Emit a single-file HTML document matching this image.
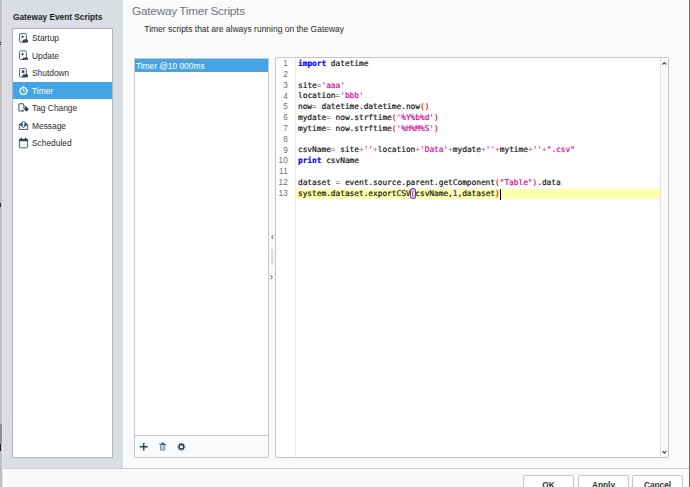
<!DOCTYPE html>
<html lang="en">
<head>
<meta charset="utf-8">
<title>Gateway Event Scripts</title>
<style>
html,body{margin:0;padding:0;}
body{width:690px;height:487px;overflow:hidden;position:relative;background:#fafafa;
  font-family:"Liberation Sans","DejaVu Sans",sans-serif;font-size:8.4px;color:#2b2b2b;}
.abs{position:absolute;}
#edgeL{left:0;top:0;width:1.9px;height:487px;background:#bebebe;}
.mk{position:absolute;left:0;}
#edgeL2{left:1.9px;top:0;width:1.1px;height:487px;background:#e6e7e9;}
#edgeR{left:689px;top:0;width:1px;height:487px;background:#6e6e6e;}
#sidebar{left:3px;top:0;width:119.5px;height:468px;background:#dadde1;}
#main{left:122.5px;top:0;width:566.5px;height:468px;background:#fafafa;border:solid #fff;border-width:1.2px 1px 1.4px 2px;box-sizing:border-box;}
#footer{left:3px;top:468px;width:686px;height:19px;background:#f9f9f9;border-top:1px solid #c9cdd3;box-sizing:border-box;}
#sbTitle{left:13px;top:11px;transform:rotate(0.01deg);font-weight:bold;font-size:8.3px;color:#222;white-space:nowrap;line-height:12px;}
#sbList{left:12px;top:28px;width:101px;height:430px;background:#fff;border:1px solid #b1b5bb;box-sizing:border-box;}
.item{position:absolute;left:0;width:99px;height:17px;line-height:17px;white-space:nowrap;color:#2b2b2b;}
.item span{position:absolute;left:18.8px;top:0;}
.item svg{position:absolute;left:6px;top:3px;}
.item.sel{color:#fff;}
#sbSel{left:-0.4px;top:52.8px;width:99.4px;height:16.9px;background:#45a4e4;}
#title{left:131.6px;top:1.5px;transform:rotate(0.01deg);font-size:11.8px;letter-spacing:-0.23px;word-spacing:-0.5px;color:#6e7680;white-space:nowrap;line-height:18px;}
#subtitle{left:144.3px;top:23px;font-size:8.47px;color:#2b2b2b;white-space:nowrap;line-height:12px;}
#scList{left:134.3px;top:57.5px;width:134.7px;height:378.5px;background:#fff;border:1px solid #c6cacf;box-sizing:border-box;}
#scSel{left:0;top:0;width:133px;height:13.4px;background:#45a4e4;color:#fff;line-height:15px;white-space:nowrap;}
#scSel span{position:absolute;left:0.6px;top:0;}
#scTools{left:134.3px;top:435.3px;width:134.7px;height:22.3px;border-radius:0 0 2px 2px;background:#f9fafb;border:1px solid #c3c7cc;box-sizing:border-box;}
#editor{left:275px;top:57.3px;width:394px;height:400.4px;background:#fff;border:1px solid #c1c6cc;border-radius:2px;box-sizing:border-box;}
#gutLine{left:18.9px;top:0;width:1px;height:399px;background:#eaeaea;}
#vsb{left:384.4px;top:0;width:7.6px;height:399px;background:#fbfbfb;border-left:1px solid #dde0e5;box-sizing:border-box;}
#hl{left:19.7px;top:130.4px;width:364px;height:10.8px;background:#ffffaa;}
#code{left:0;top:0;width:380px;height:399px;transform:rotate(0.005deg);transform-origin:0 0;}
.ln{position:absolute;left:0;width:11.9px;text-align:right;font-size:8.2px;letter-spacing:0.15px;color:#707070;height:11px;line-height:11px;}
.cl{position:absolute;left:22px;height:11px;line-height:11px;white-space:pre;
  font-family:"DejaVu Sans Mono","Liberation Mono",monospace;font-size:7.9px;letter-spacing:-0.061px;color:#111;-webkit-text-stroke:0.18px currentColor;}
.k{color:#0000ff;font-weight:bold;}
.s{color:#dc009c;}
.p{color:#ff0000;}
.o{color:#a07070;-webkit-text-stroke:0;}
.n{color:#6400c8;}
.mb{outline:1px solid #3a3ad0;outline-offset:-0.5px;border-radius:2px;background:#f4f2ff;}
#caret{left:223.8px;top:130.4px;width:1px;height:11px;background:#000;}
.btn{top:475px;width:51px;height:20px;background:#fff;border:1px solid #c3c7cc;border-radius:2px;box-sizing:border-box;
  text-align:center;font-weight:bold;font-size:8.3px;color:#333;line-height:12px;}
.btn span{position:absolute;left:0;right:0;top:3px;}
</style>
</head>
<body>
<div id="main" class="abs"></div>
<div id="sidebar" class="abs"></div>
<div id="footer" class="abs"></div>
<div id="edgeL" class="abs"></div>
<div id="edgeL2" class="abs"></div>
<div class="mk" style="top:42px;width:1px;height:1.2px;background:#222"></div>
<div class="mk" style="top:44.2px;width:1px;height:1.2px;background:#222"></div>
<div class="mk" style="top:22px;width:1.6px;height:1px;background:#d8c9a8"></div>
<div class="mk" style="top:202.5px;width:1px;height:4px;background:#3a3048"></div>
<div class="mk" style="top:424px;width:1.8px;height:20px;background:#938e8e"></div>
<div class="mk" style="top:444.4px;width:1.2px;height:6.4px;background:#2a1030"></div>
<div id="edgeR" class="abs"></div>

<div id="sbTitle" class="abs">Gateway Event Scripts</div>
<div id="sbList" class="abs">
  <div id="sbSel" class="abs"></div>
  <div class="item" style="top:1px"><span style="transform:translateY(0.45px) rotate(0.01deg)">Startup</span></div>
  <div class="item" style="top:19px"><span style="transform:translateY(-0.08px) rotate(0.01deg)">Update</span></div>
  <div class="item" style="top:36px"><span style="transform:translateY(0.39px) rotate(0.01deg)">Shutdown</span></div>
  <div class="item sel" style="top:54px"><span style="transform:translateY(-0.14px) rotate(0.01deg)">Timer</span></div>
  <div class="item" style="top:71px"><span style="transform:translateY(0.33px) rotate(0.01deg)">Tag Change</span></div>
  <div class="item" style="top:89px"><span style="transform:translateY(-0.20px) rotate(0.01deg)">Message</span></div>
  <div class="item" style="top:106px"><span style="transform:translateY(0.27px) rotate(0.01deg)">Scheduled</span></div>
</div>

<div id="title" class="abs">Gateway Timer Scripts</div>
<div id="subtitle" class="abs">Timer scripts that are always running on the Gateway</div>

<div id="scList" class="abs">
  <div id="scSel" class="abs"><span>Timer @10 000ms</span></div>
</div>
<div id="scTools" class="abs"></div>

<div id="editor" class="abs">
  <div id="gutLine" class="abs"></div>
  <div id="hl" class="abs"></div>
  <div id="vsb" class="abs"></div>
  <div id="caret" class="abs"></div>
  <div id="code" class="abs">
  <div class="ln" style="top:0.1px">1</div>
  <div class="cl" style="top:0.05px"><span class="k">import</span> datetime</div>
  <div class="ln" style="top:10.9px">2</div>
  <div class="ln" style="top:21.7px">3</div>
  <div class="cl" style="top:21.65px">site<span class="o">=</span><span class="s">'aaa'</span></div>
  <div class="ln" style="top:32.5px">4</div>
  <div class="cl" style="top:32.45px">location<span class="o">=</span><span class="s">'bbb'</span></div>
  <div class="ln" style="top:43.3px">5</div>
  <div class="cl" style="top:43.25px">now<span class="o">=</span> datetime.datetime.now<span class="p">(</span><span class="p">)</span></div>
  <div class="ln" style="top:54.1px">6</div>
  <div class="cl" style="top:54.05px">mydate<span class="o">=</span> now.strftime<span class="p">(</span><span class="s">'%Y%b%d'</span><span class="p">)</span></div>
  <div class="ln" style="top:64.9px">7</div>
  <div class="cl" style="top:64.85px">mytime<span class="o">=</span> now.strftime<span class="p">(</span><span class="s">'%H%M%S'</span><span class="p">)</span></div>
  <div class="ln" style="top:75.7px">8</div>
  <div class="ln" style="top:86.5px">9</div>
  <div class="cl" style="top:86.45px">csvName<span class="o">=</span> site<span class="o">+</span><span class="s">''</span><span class="o">+</span>location<span class="o">+</span><span class="s">'Data'</span><span class="o">+</span>mydate<span class="o">+</span><span class="s">''</span><span class="o">+</span>mytime<span class="o">+</span><span class="s">''</span><span class="o">+</span><span class="s">".csv"</span></div>
  <div class="ln" style="top:97.3px">10</div>
  <div class="cl" style="top:97.25px"><span class="k">print</span> csvName</div>
  <div class="ln" style="top:108.1px">11</div>
  <div class="ln" style="top:118.9px">12</div>
  <div class="cl" style="top:118.85px">dataset <span class="o">=</span> event.source.parent.getComponent<span class="p">(</span><span class="s">"Table"</span><span class="p">)</span>.data</div>
  <div class="ln" style="top:129.7px">13</div>
  <div class="cl" style="top:129.65px">system.dataset.exportCSV<span class="p mb">(</span>csvName,<span class="n">1</span>,dataset<span class="p">)</span></div>
  </div>
</div>

<!-- sidebar icons -->
<svg class="abs" style="left:17px;top:31px" width="13" height="13" viewBox="0 0 13 13">
  <rect x="2.5" y="2.6" width="6.9" height="8.6" rx="1.3" fill="#fff" stroke="#4f617a" stroke-width="0.95"/>
  <path d="M4.6 4.2 L7.4 5.8 L4.6 7.4 Z" fill="#33455f"/>
  <path d="M5.4 11.5 L5.4 9.8 Q6 8.3 7.5 8.6 Q9 7.5 10.4 8.5 Q11.5 9.2 11.1 11.5 Z" fill="#33455f"/>
</svg>
<svg class="abs" style="left:17px;top:48px" width="13" height="13" viewBox="0 0 13 13">
  <rect x="2.5" y="2.9" width="6.9" height="8.6" rx="1.3" fill="#fff" stroke="#4f617a" stroke-width="0.95"/>
  <path d="M4.6 4.6 L7.4 6.2 L4.6 7.8 Z" fill="#33455f"/>
  <rect x="5.6" y="9.6" width="5.5" height="2.2" rx="0.5" fill="#33455f"/>
</svg>
<svg class="abs" style="left:17px;top:66px" width="13" height="13" viewBox="0 0 13 13">
  <rect x="2.5" y="2.4" width="6.9" height="8.6" rx="1.3" fill="#fff" stroke="#4f617a" stroke-width="0.95"/>
  <rect x="4.8" y="4.3" width="2.6" height="2.6" fill="#33455f"/>
  <path d="M5.4 11.3 L5.4 9.6 Q6 8.1 7.5 8.4 Q9 7.3 10.4 8.3 Q11.5 9 11.1 11.3 Z" fill="#33455f"/>
</svg>
<svg class="abs" style="left:17px;top:84px" width="13" height="13" viewBox="0 0 13 13">
  <circle cx="6.4" cy="6.95" r="3.35" fill="none" stroke="#fff" stroke-width="1.15"/>
  <path d="M6.4 1.9 V3.4 M10 6.9 H10.9" stroke="#fff" stroke-width="1.1" fill="none"/>
  <path d="M6.4 5 V7.1 H8" stroke="#fff" stroke-width="0.9" fill="none"/>
</svg>
<svg class="abs" style="left:17px;top:101px" width="13" height="13" viewBox="0 0 13 13">
  <path d="M6.8 4.9 V3.7 L5.9 2.75 H2.7 Q1.9 2.75 1.9 3.55 V9.2 Q1.9 10 2.7 10 H4.6" fill="none" stroke="#41536d" stroke-width="1.05"/>
  <path d="M4.2 10.5 L5.6 8.3 L7.3 10.5 Z" fill="#33455f"/>
  <path d="M6.2 5.2 L8.5 4.9 L11.9 8.3 L9.6 10.8 L6.3 7.6 Z" fill="#33455f"/>
  <circle cx="7.35" cy="6.3" r="0.7" fill="#fff"/>
</svg>
<svg class="abs" style="left:17px;top:119px" width="13" height="13" viewBox="0 0 13 13">
  <path d="M6.5 1.9 L11.1 5.3 L6.5 9 L1.9 5.3 Z" fill="#42546e"/>
  <path d="M2.35 5.3 V10.4 H10.65 V5.3" fill="none" stroke="#3b4d67" stroke-width="0.95"/>
  <path d="M6.5 3.4 V7.9" stroke="#fff" stroke-width="1.25" fill="none"/>
  <path d="M4.8 5.1 L6.5 3 L8.2 5.1 Z" fill="#fff"/>
</svg>
<svg class="abs" style="left:17px;top:136px" width="13" height="13" viewBox="0 0 13 13">
  <rect x="2.4" y="3.4" width="8.2" height="8.4" rx="0.8" fill="#fff" stroke="#4f617a" stroke-width="1"/>
  <path d="M3.6 8.3 H9.4" stroke="#d5d9de" stroke-width="0.8"/>
  <rect x="2" y="3.1" width="9" height="2.2" fill="#33455f"/>
  <rect x="3.5" y="1.7" width="1.7" height="2.2" fill="#33455f"/>
  <rect x="7.8" y="1.7" width="1.7" height="2.2" fill="#33455f"/>
</svg>
<!-- toolbar icons -->
<svg class="abs" style="left:138px;top:441px" width="12" height="12" viewBox="0 0 12 12">
  <path d="M5.7 1.9 V9.6 M1.7 5.75 H9.7" stroke="#2e4260" stroke-width="1.5" fill="none"/>
</svg>
<svg class="abs" style="left:157px;top:441px" width="12" height="12" viewBox="0 0 12 12">
  <path d="M2.3 3.3 H9.1 M4.4 2.2 H7" stroke="#4b5c76" stroke-width="1.2" fill="none"/>
  <path d="M3.1 4.2 H8.3 V9 Q8.3 9.7 7.6 9.7 H3.8 Q3.1 9.7 3.1 9 Z" fill="#93a0b1"/>
  <path d="M5.7 4.6 V9" stroke="#fff" stroke-width="0.9"/>
</svg>
<svg class="abs" style="left:175px;top:441px" width="13" height="12" viewBox="0 0 13 12">
  <g transform="translate(6.4 5.75) scale(0.93)">
    <g fill="#2e4260">
      <rect x="-0.85" y="-4.1" width="1.7" height="8.2"/>
      <rect x="-0.85" y="-4.1" width="1.7" height="8.2" transform="rotate(45)"/>
      <rect x="-0.85" y="-4.1" width="1.7" height="8.2" transform="rotate(90)"/>
      <rect x="-0.85" y="-4.1" width="1.7" height="8.2" transform="rotate(135)"/>
      <circle r="2.9"/>
    </g>
    <circle r="1.7" fill="#f8f9fa"/>
  </g>
</svg>
<!-- splitter -->
<svg class="abs" style="left:269px;top:230px" width="7" height="54" viewBox="0 0 7 54">
  <path d="M4.4 5 L2.6 7 L4.4 9" stroke="#4b5c76" stroke-width="1" fill="none"/>
  <path d="M1.6 45.3 L3.4 47.3 L1.6 49.3" stroke="#4b5c76" stroke-width="1" fill="none"/>
  <rect x="2" y="19" width="2.4" height="16" fill="#dedede"/>
</svg>
<!-- scrollbar arrows -->
<svg class="abs" style="left:660px;top:58px" width="9" height="400" viewBox="0 0 9 400">
  <path d="M2.5 6.5 L4.4 4.6 L6.3 6.5" stroke="#3d4f69" stroke-width="1.25" fill="none"/>
  <path d="M2.5 393.1 L4.4 395 L6.3 393.1" stroke="#3d4f69" stroke-width="1.25" fill="none"/>
</svg>
<!-- buttons -->
<div class="btn abs" style="left:523px"><span>OK</span></div>
<div class="btn abs" style="left:578px"><span>Apply</span></div>
<div class="btn abs" style="left:632px"><span>Cancel</span></div>
</body>
</html>
